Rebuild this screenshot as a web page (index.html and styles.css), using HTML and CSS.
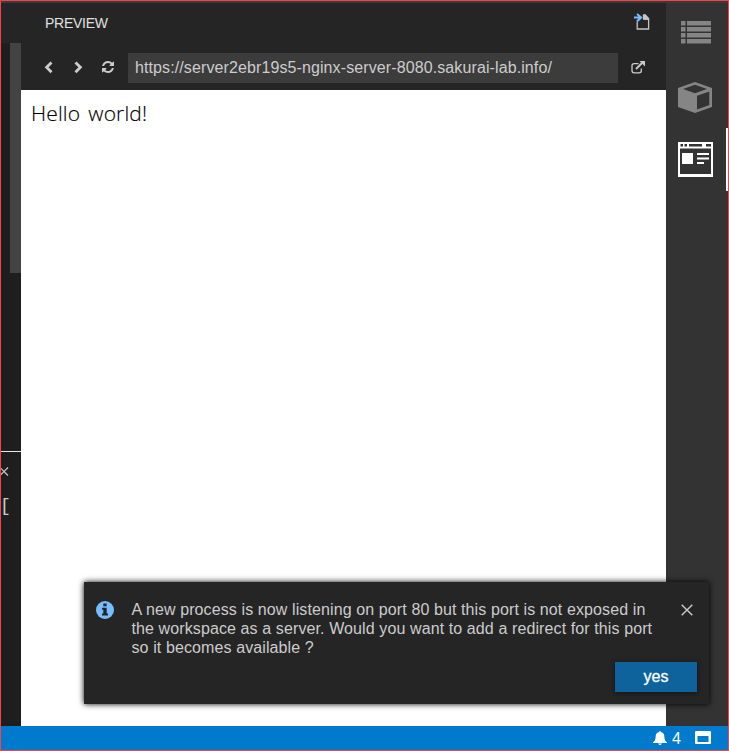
FILE: index.html
```html
<!DOCTYPE html>
<html lang="en">
<head>
<meta charset="utf-8">
<title>Preview</title>
<link rel="stylesheet" href="styles.css">
</head>
<body>
<div class="window">
  <div class="workspace">
    <aside class="editor">
      <div class="editor-tabs"></div>
      <div class="editor-body"><div class="scroll-thumb"></div></div>
      <div class="terminal">
        <svg class="terminal-close" width="8" height="9" viewBox="0 0 8 9"><path d="M-1 0.5 7 8.5M7 0.5-1 8.5"/></svg>
        <div class="terminal-text">[</div>
      </div>
    </aside>
    <main class="preview">
      <header class="title-bar">
        <span>PREVIEW</span>
        <svg width="16" height="18" viewBox="0 0 16 18"><path class="file" d="M9 1.800h2l3.600 3.800v10.400H3.200V8.500M9.500 1.800v4.400h5"/><path class="file-fill" d="M10 1.500h1.500L15 5.700v1h-5z"/><path class="arrow" d="M0 3.400h4.500L2.300 1.700 3.700.3 8.600 4.500 3.700 9.200 2.300 7.500 4.500 5.600H0z"/></svg>
      </header>
      <div class="toolbar">
        <svg class="chevron" width="10" height="13" viewBox="0 0 10 13"><path d="M7.500 1.400 2.600 6.300l4.900 4.900"/></svg>
        <svg class="chevron next" width="10" height="13" viewBox="0 0 10 13"><path d="m2.500 1.400 4.900 4.900-4.900 4.900"/></svg>
        <svg class="refresh" width="12" height="12" viewBox="0 0 1536 1536"><path d="M1511 928q0 5-1 7-64 268-268 434.500T764 1536q-146 0-282.500-55T238 1324l-129 129q-19 19-45 19t-45-19-19-45V960q0-26 19-45t45-19h448q26 0 45 19t19 45-19 45l-137 137q71 66 161 102t187 36q134 0 250-65t186-179q11-17 53-117 8-23 30-23h192q13 0 22.500 9.500T1511 928zm25-800v448q0 26-19 45t-45 19h-448q-26 0-45-19t-19-45 19-45l138-138Q969 256 768 256q-134 0-250 65T332 500q-11 17-53 117-8 23-30 23H50q-13 0-22.500-9.500T18 608v-7q65-268 270-434.500T768 0q146 0 284 55.500T1297 212l130-129q19-19 45-19t45 19 19 45z"/></svg>
        <div class="address">https://server2ebr19s5-nginx-server-8080.sakurai-lab.info/</div>
        <svg class="external" width="14" height="13" viewBox="0 0 14 13"><path class="outline" d="M7.500 2.700H3.100Q1 2.700 1 4.800v5Q1 11.900 3.100 11.900h5.100q2.100 0 2.100-2.100V7.500"/><path class="outline thick" d="m5 8 6-6"/><path class="tip" d="M8.500 0H14v5.500z"/></svg>
      </div>
      <section class="page">Hello world!</section>
    </main>
    <nav class="activity">
      <div class="activity-item list"><svg width="30" height="23" viewBox="0 0 30 23"><path d="M0 0h4.500v4.500H0zM6 0h24v4.500H6zM0 6h4.500v4.500H0zM6 6h24v4.500H6zM0 12h4.500v4.500H0zM6 12h24v4.500H6zM0 18h4.500v4.500H0zM6 18h24v4.500H6z"/></svg></div>
      <div class="activity-item cube"><svg width="34" height="31" viewBox="0 0 34 31"><path fill-rule="evenodd" d="M17 0 34 6v19L17 31 0 25V6zM5 7l12 4.200L29 7 17 2.700zM19 13.700v13.800L31.300 23V9.500z"/></svg></div>
      <div class="activity-item active"><svg width="35" height="35" viewBox="0 0 35 35"><path fill-rule="evenodd" d="M0 0h35v35H0zM2 6.500V32h31V6.500zM2.500 2v2.500H5V2zM6.500 2v2.500H9V2zM11 2v2.500h13V2zM28 2v2.500h5V2z"/><path d="M4 11h11v11H4zM19 11h12v2H19zM19 15.500h12v2H19zM19 20h7v2h-7z"/></svg></div>
    </nav>
  </div>
  <footer class="status-bar">
    <svg class="bell" width="14" height="14" viewBox="0 0 14 14"><path d="M6 1q1-2 2 0c2.500.6 3.400 2.400 3.400 5 0 2.700.9 4 2.600 5.200V12H0v-.800C1.700 10 2.600 8.700 2.600 6c0-2.600.9-4.400 3.400-5zM5 12.500h4q-2 3-4 0z"/></svg>
    <span class="count">4</span>
    <svg class="panel" width="16" height="13" viewBox="0 0 16 13"><path fill-rule="evenodd" d="M1 0h14q1 0 1 1v11q0 1-1 1H1q-1 0-1-1V1q0-1 1-1zM2.500 5v6h11V5z"/></svg>
  </footer>
  <div class="toast" role="alert">
    <svg class="info" width="18" height="18" viewBox="0 0 18 18"><circle cx="9" cy="9" r="9"/><path d="M7.300 2.500h3.400v2.800H7.300zM6 6.700h4.700v5.700H12v2.100H6v-2.100h1.300V8.800H6z"/></svg>
    <p>A new process is now listening on port 80 but this port is not exposed in<br>the workspace as a server. Would you want to add a redirect for this port<br>so it becomes available ?</p>
    <svg class="close" width="12" height="12" viewBox="0 0 12 12"><path d="m.7.700 10.600 10.600M11.300.700.700 11.300"/></svg>
    <button>yes</button>
  </div>
</div>
</body>
</html>
```
FILE: styles.css
```css
* { box-sizing: border-box; }
body { margin: 0; font-family: "Liberation Sans", Arial, sans-serif; color: #ccc; }
svg { display: block; flex: none; }
.window { position: relative; display: flex; flex-direction: column; width: 729px; height: 751px; border: 1px solid #fb4141; background: #1e1e1e; overflow: hidden; }
.workspace { display: grid; grid-template-columns: 20px 645px 62px; flex: 1; border-top: 2px solid #3a3a3a; }
.editor { display: flex; flex-direction: column; }
.editor-tabs { height: 40px; background: #252526; }
.editor-body { height: 408px; }
.scroll-thumb { width: 11px; height: 230px; margin-left: 9px; background: #434343; }
.terminal { flex: 1; border-top: 1px solid #e7e7e7; }
.terminal-close { margin-top: 15px; fill: none; stroke: #ccc; stroke-width: 1.200; }
.terminal-text { margin: 18px 0 0 2px; font: 18px/24px "Liberation Mono", monospace; width: 10px; text-indent: -3px; }
.preview { display: flex; flex-direction: column; background: #fff; }
.title-bar { display: flex; justify-content: space-between; height: 40px; padding: 10px 16px 0 24px; background: #252526; font-size: 14px; line-height: 20px; letter-spacing: -.25px; color: #e0e0e0; }
.file { fill: none; stroke: #c5c5c5; stroke-width: 1.300; }
.file-fill { fill: #c5c5c5; }
.arrow { fill: #75beff; }
.toolbar { display: flex; align-items: center; height: 47px; padding: 2px 0 0 23px; background: #252526; }
.chevron { fill: none; stroke: #ccc; stroke-width: 2.800; }
.chevron.next { margin-left: 19px; }
.refresh { margin: 0 1px 1px 19px; fill: #ccc; }
.address { width: 490px; height: 30px; margin-left: 13px; padding-left: 7px; background: #3c3c3c; font-size: 16px; line-height: 29px; letter-spacing: .105px; white-space: nowrap; }
.external { margin-left: 13px; }
.external .outline { fill: none; stroke: #ccc; stroke-width: 1.300; }
.external .thick { stroke-width: 2; }
.external .tip { fill: #ccc; }
.page { flex: 1; padding: 7px 10px; color: #000; font: 300 21px/32px "Open Sans", sans-serif; letter-spacing: .15px; word-spacing: 2.500px; -webkit-text-stroke: .15px #000; }
.activity { background: #333; fill: #858585; }
.activity-item { display: flex; justify-content: center; height: 63px; }
.activity-item.list { height: 62px; padding-top: 18px; padding-right: 2px; }
.activity-item.cube { padding-top: 17px; padding-right: 4px; }
.activity-item.active { padding-top: 14px; padding-right: 1px; border-right: 2px solid #fff; fill: #fff; }
.status-bar { display: flex; align-items: center; justify-content: flex-end; height: 24px; padding-right: 17px; background: #007acc; color: #fff; fill: #fff; font-size: 16px; }
.bell { margin-right: 5px; }
.count { width: 9px; margin-right: 14px; padding-top: 1px; }
.panel { margin-bottom: 1px; }
.toast { position: absolute; left: 83px; top: 581px; display: grid; grid-template-columns: 35px 1fr 12px; grid-template-rows: 57px 1fr; width: 625px; height: 122px; padding: 18px 15px 0 12px; background: #252526; box-shadow: 0 0 6px #000; }
.toast p { margin: 0 0 0 .5px; font-size: 16px; line-height: 19px; letter-spacing: .107px; white-space: nowrap; }
.info { margin-top: 1px; fill: #75beff; }
.info path { fill: #252526; }
.close { margin: 4px 0 0 -1px; fill: none; stroke: #ccc; stroke-width: 1.400; }
.toast button { grid-column: 1 / -1; justify-self: end; width: 82px; height: 30px; margin: 5px -3px 0 0; padding: 0; border: 0; background: #0e639c; color: #fff; font: 16px/28px "Liberation Sans", sans-serif; -webkit-text-stroke: .3px #fff; box-shadow: 0 1px 4px #111; }
```
